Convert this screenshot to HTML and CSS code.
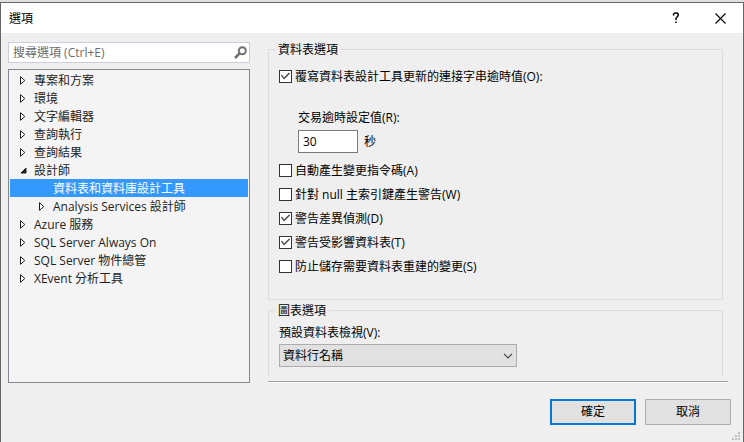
FILE: index.html
```html
<!DOCTYPE html>
<html lang="zh-Hant">
<head>
  <meta charset="UTF-8">
  <meta name="viewport" content="width=device-width, initial-scale=1.0">
  <title>選項</title>
  <link rel="stylesheet" href="styles.css">
</head>
<body>
  <form class="dialog">
    <header class="titlebar">
      <h1>選項</h1>
      <button type="button" class="title-btn" aria-label="說明">
        <svg width="8" height="12" viewBox="0 0 8 12"><path d="M1.5 3.5V2.5Q1.7 1 3.5 1H4.5Q6.3 1 6.3 2.8Q6.3 4 5 5Q4 5.8 4 7V8M4 9.5V11" fill="none" stroke="#000" stroke-width="1.5"/></svg>
      </button>
      <button type="button" class="title-btn" aria-label="關閉">
        <svg width="11" height="11" viewBox="0 0 11 11"><path d="M.5.5l10 10M10.5.5l-10 10" stroke="#000" stroke-width="1.1"/></svg>
      </button>
    </header>

    <main class="content">
      <div class="sidebar">
        <div class="search">
          <input type="text" placeholder="搜尋選項 (Ctrl+E)" aria-label="搜尋選項">
          <svg width="13" height="13" viewBox="0 0 13 13"><circle cx="8.3" cy="4.7" r="3.5" fill="none" stroke="#717171" stroke-width="2"/><path d="M5.8 7.2L1 12" stroke="#717171" stroke-width="2.6"/></svg>
        </div>
        <ul class="tree" role="tree">
          <li role="treeitem"><i class="arrow"><svg width="6" height="9" viewBox="0 0 6 9"><path d="M.5.7v7.6L4.8 4.5z"/></svg></i><span>專案和方案</span></li>
          <li role="treeitem"><i class="arrow"><svg width="6" height="9" viewBox="0 0 6 9"><path d="M.5.7v7.6L4.8 4.5z"/></svg></i><span>環境</span></li>
          <li role="treeitem"><i class="arrow"><svg width="6" height="9" viewBox="0 0 6 9"><path d="M.5.7v7.6L4.8 4.5z"/></svg></i><span>文字編輯器</span></li>
          <li role="treeitem"><i class="arrow"><svg width="6" height="9" viewBox="0 0 6 9"><path d="M.5.7v7.6L4.8 4.5z"/></svg></i><span>查詢執行</span></li>
          <li role="treeitem"><i class="arrow"><svg width="6" height="9" viewBox="0 0 6 9"><path d="M.5.7v7.6L4.8 4.5z"/></svg></i><span>查詢結果</span></li>
          <li role="treeitem" aria-expanded="true"><i class="arrow open"><svg width="7" height="7" viewBox="0 0 7 7"><path d="M6 1v5H1z"/></svg></i><span>設計師</span></li>
          <li role="treeitem" class="child selected" aria-selected="true"><i class="arrow"></i><span>資料表和資料庫設計工具</span></li>
          <li role="treeitem" class="child"><i class="arrow"><svg width="6" height="9" viewBox="0 0 6 9"><path d="M.5.7v7.6L4.8 4.5z"/></svg></i><span>Analysis Services 設計師</span></li>
          <li role="treeitem"><i class="arrow"><svg width="6" height="9" viewBox="0 0 6 9"><path d="M.5.7v7.6L4.8 4.5z"/></svg></i><span>Azure 服務</span></li>
          <li role="treeitem"><i class="arrow"><svg width="6" height="9" viewBox="0 0 6 9"><path d="M.5.7v7.6L4.8 4.5z"/></svg></i><span>SQL Server Always On</span></li>
          <li role="treeitem"><i class="arrow"><svg width="6" height="9" viewBox="0 0 6 9"><path d="M.5.7v7.6L4.8 4.5z"/></svg></i><span>SQL Server 物件總管</span></li>
          <li role="treeitem"><i class="arrow"><svg width="6" height="9" viewBox="0 0 6 9"><path d="M.5.7v7.6L4.8 4.5z"/></svg></i><span>XEvent 分析工具</span></li>
        </ul>
      </div>

      <div class="panel">
        <fieldset class="group">
          <legend>資料表選項</legend>
          <label class="check"><input type="checkbox" checked><span>覆寫資料表設計工具更新的連接字串逾時值(O):</span></label>
          <div class="timeout">
            <label for="timeout">交易逾時設定值(R):</label>
            <div class="timeout-row">
              <input type="text" id="timeout" value="30">
              <span>秒</span>
            </div>
          </div>
          <label class="check"><input type="checkbox"><span>自動產生變更指令碼(A)</span></label>
          <label class="check"><input type="checkbox"><span>針對 null 主索引鍵產生警告(W)</span></label>
          <label class="check"><input type="checkbox" checked><span>警告差異偵測(D)</span></label>
          <label class="check"><input type="checkbox" checked><span>警告受影響資料表(T)</span></label>
          <label class="check"><input type="checkbox"><span>防止儲存需要資料表重建的變更(S)</span></label>
        </fieldset>

        <fieldset class="group diagram">
          <legend>圖表選項</legend>
          <label for="view">預設資料表檢視(V):</label>
          <div class="select">
            <select id="view">
              <option>資料行名稱</option>
            </select>
            <svg width="10" height="6" viewBox="0 0 10 6"><path d="M1 .8l4 4 4-4" fill="none" stroke="#444" stroke-width="1.2"/></svg>
          </div>
        </fieldset>
        <hr>
      </div>
    </main>

    <footer class="actions">
      <button type="submit" class="btn primary">確定</button>
      <button type="button" class="btn">取消</button>
      <svg class="grip" width="8" height="8" viewBox="0 0 8 8"><path d="M6 0h2v2H6zM3 3h2v2H3zM6 3h2v2H6zM0 6h2v2H0zM3 6h2v2H3zM6 6h2v2H6z" fill="#bfbfbf"/></svg>
    </footer>
  </form>
</body>
</html>
```
FILE: styles.css
```css
* {
  box-sizing: border-box;
}

body {
  margin: 0;
  padding-top: 2px;
  background: #e0e0e0;
  color: #000;
  font: 12px/18px "Open Sans", "Noto Sans CJK TC", sans-serif;
}

input,
select,
button {
  font: inherit;
  color: inherit;
}

.dialog {
  position: relative;
  background: #efefef;
  border: 1px solid #666;
  border-bottom: none;
}

/* title bar */
.titlebar {
  display: flex;
  align-items: center;
  height: 30px;
  padding-left: 8px;
  background: #fff;
}

.titlebar h1 {
  flex: 1;
  margin: 0;
  padding-top: 2px;
  font-size: 12px;
  font-weight: normal;
}

.title-btn {
  display: flex;
  align-items: center;
  justify-content: center;
  width: 45px;
  height: 30px;
  padding: 0;
  border: none;
  background: none;
}

/* main area */
.content {
  display: flex;
  gap: 18px;
  padding: 0 15px 0 7px;
}

.sidebar {
  display: flex;
  flex-direction: column;
  flex: 0 0 242px;
  gap: 6px;
  padding-top: 9px;
}

.search {
  display: flex;
  align-items: center;
  height: 21px;
  padding: 0 2px 0 4px;
  background: #fff;
  border: 1px solid #cccedb;
}

.search input {
  flex: 1;
  min-width: 0;
  height: 18px;
  padding: 0;
  border: none;
  outline: none;
  background: none;
}

.search input::placeholder {
  color: #6d6d6d;
}

.tree {
  flex: 1;
  margin: 0;
  padding: 1px;
  list-style: none;
  background: #f4f4f4;
  border: 1px solid #828790;
  color: #1e1e1e;
}

.tree li {
  display: flex;
  align-items: center;
  height: 18px;
  padding-left: 10px;
  white-space: nowrap;
}

.tree span,
.check span {
  padding-top: 2px;
}

.tree .child {
  padding-left: 29px;
}

.tree .selected {
  background: #3399ff;
  color: #fff;
}

.arrow {
  display: flex;
  width: 14px;
}

.arrow path {
  fill: #fff;
  stroke: #1e1e1e;
}

.arrow.open path {
  fill: #1e1e1e;
}

/* option groups */
.panel {
  flex: 1;
  min-width: 0;
  padding-top: 6px;
}

.group {
  min-width: 0;
  margin: 0 5px 0 0;
  padding: 5px 10px 21px;
  border: 1px solid #dcdcdc;
}

.group legend {
  margin-left: -4px;
  padding: 2px 3px 0;
}

.check {
  display: flex;
  align-items: center;
  gap: 3px;
  height: 24px;
}

.check input {
  appearance: none;
  width: 13px;
  height: 13px;
  margin: 0;
  background: #fff;
  border: 1px solid #333;
}

.check input:checked::before {
  content: "";
  display: block;
  height: 11px;
  background: #444;
  clip-path: polygon(1px 5px, 2px 4px, 4px 7px, 9px 2px, 10px 3px, 4px 9px);
}

.timeout {
  padding: 21px 0 5px 19px;
}

.timeout label {
  display: block;
  margin-bottom: 3px;
}

.timeout-row {
  display: flex;
  align-items: center;
  gap: 6px;
}

.timeout input {
  width: 60px;
  height: 23px;
  padding: 0 4px;
  background: #fff;
  border: 1px solid #7a7a7a;
}

.diagram {
  margin-bottom: 5px;
  padding-top: 4px;
  padding-bottom: 9px;
  border-bottom: none;
}

.diagram label {
  display: block;
  margin-bottom: 2px;
}

.select {
  position: relative;
  width: 238px;
}

.select select {
  display: block;
  appearance: none;
  width: 100%;
  height: 23px;
  padding: 0 3px;
  background: #e1e1e1;
  border: 1px solid #adadad;
  border-radius: 0;
}

.select svg {
  position: absolute;
  top: 9px;
  right: 4px;
  pointer-events: none;
}

.panel hr {
  margin: 0;
  border: none;
  border-top: 1px solid #a0a0a0;
  border-bottom: 1px solid #fff;
}

/* bottom buttons */
.actions {
  display: flex;
  justify-content: flex-end;
  gap: 9px;
  padding: 16px 12px 17px;
}

.btn {
  width: 86px;
  height: 26px;
  padding: 0;
  background: #e1e1e1;
  border: 1px solid #adadad;
}

.btn.primary {
  border: 2px solid #0078d7;
}

.grip {
  position: absolute;
  right: 3px;
  bottom: 2px;
}
```
